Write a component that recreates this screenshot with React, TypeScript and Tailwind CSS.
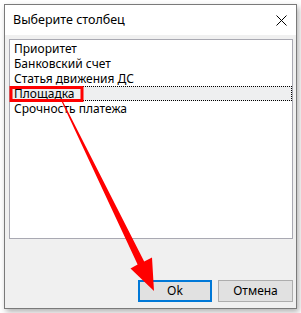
const items = ["Приоритет", "Банковский счет", "Статья движения ДС", "Площадка", "Срочность платежа"];

const font = { fontFamily: '"Noto Sans", "Liberation Sans", Arial, sans-serif' };

export default function App() {
  return (
    <div className="w-[301px] h-[313px] bg-white pt-[4px] pl-[4px] relative" style={font}>
      <div className="w-[293px] h-[305px] border border-[#7a7a7a] bg-[#f0f0f0] flex flex-col shadow-[2px_3px_6px_rgba(0,0,0,0.3)]">
        <div className="h-[30px] bg-white flex items-center justify-between pl-[8px] pr-[8px] shrink-0">
          <span className="text-[12.5px] leading-[16px] text-black">Выберите столбец</span>
          <svg width="11" height="11" viewBox="0 0 11 11" className="mr-[1px]">
            <path d="M0.5 0.5 L10.5 10.5 M10.5 0.5 L0.5 10.5" stroke="#000" strokeWidth="1" />
          </svg>
        </div>
        <div className="flex flex-col pl-[4px] pr-[3px] pt-[4px] grow">
          <div className="h-[200px] border border-[#a9a9b2] bg-white pt-[1px] flex flex-col">
            {items.map((it, i) => (
              <div
                key={i}
                className={
                  i === 3
                    ? "h-[15px] leading-[13px] text-[12px] pl-[3px] bg-[#eeeff0] border border-dotted border-black text-black"
                    : "h-[15px] leading-[15px] text-[12px] pl-[4px] text-black"
                }
              >
                {it}
              </div>
            ))}
          </div>
          <div className="flex justify-end gap-[6px] mt-[41px]">
            <button className="w-[74px] h-[22px] border-2 border-[#0078d7] bg-[#e1e1e1] text-[12px] text-black">Ok</button>
            <button className="w-[75px] h-[22px] border border-[#adadad] bg-[#e1e1e1] text-[12px] text-black">Отмена</button>
          </div>
        </div>
      </div>
      <svg className="absolute left-0 top-0 pointer-events-none" width="301" height="313" viewBox="0 0 301 313">
        <rect x="11" y="87.5" width="71" height="13" fill="none" stroke="#ff0000" strokeWidth="3" />
        <polygon
          fill="#ff0000"
          points="61.5,101.2 62.5,100.8 144.2,261.4 152,257.5 154,291 130.5,268.5 137.6,264.6"
        />
      </svg>
    </div>
  );
}
